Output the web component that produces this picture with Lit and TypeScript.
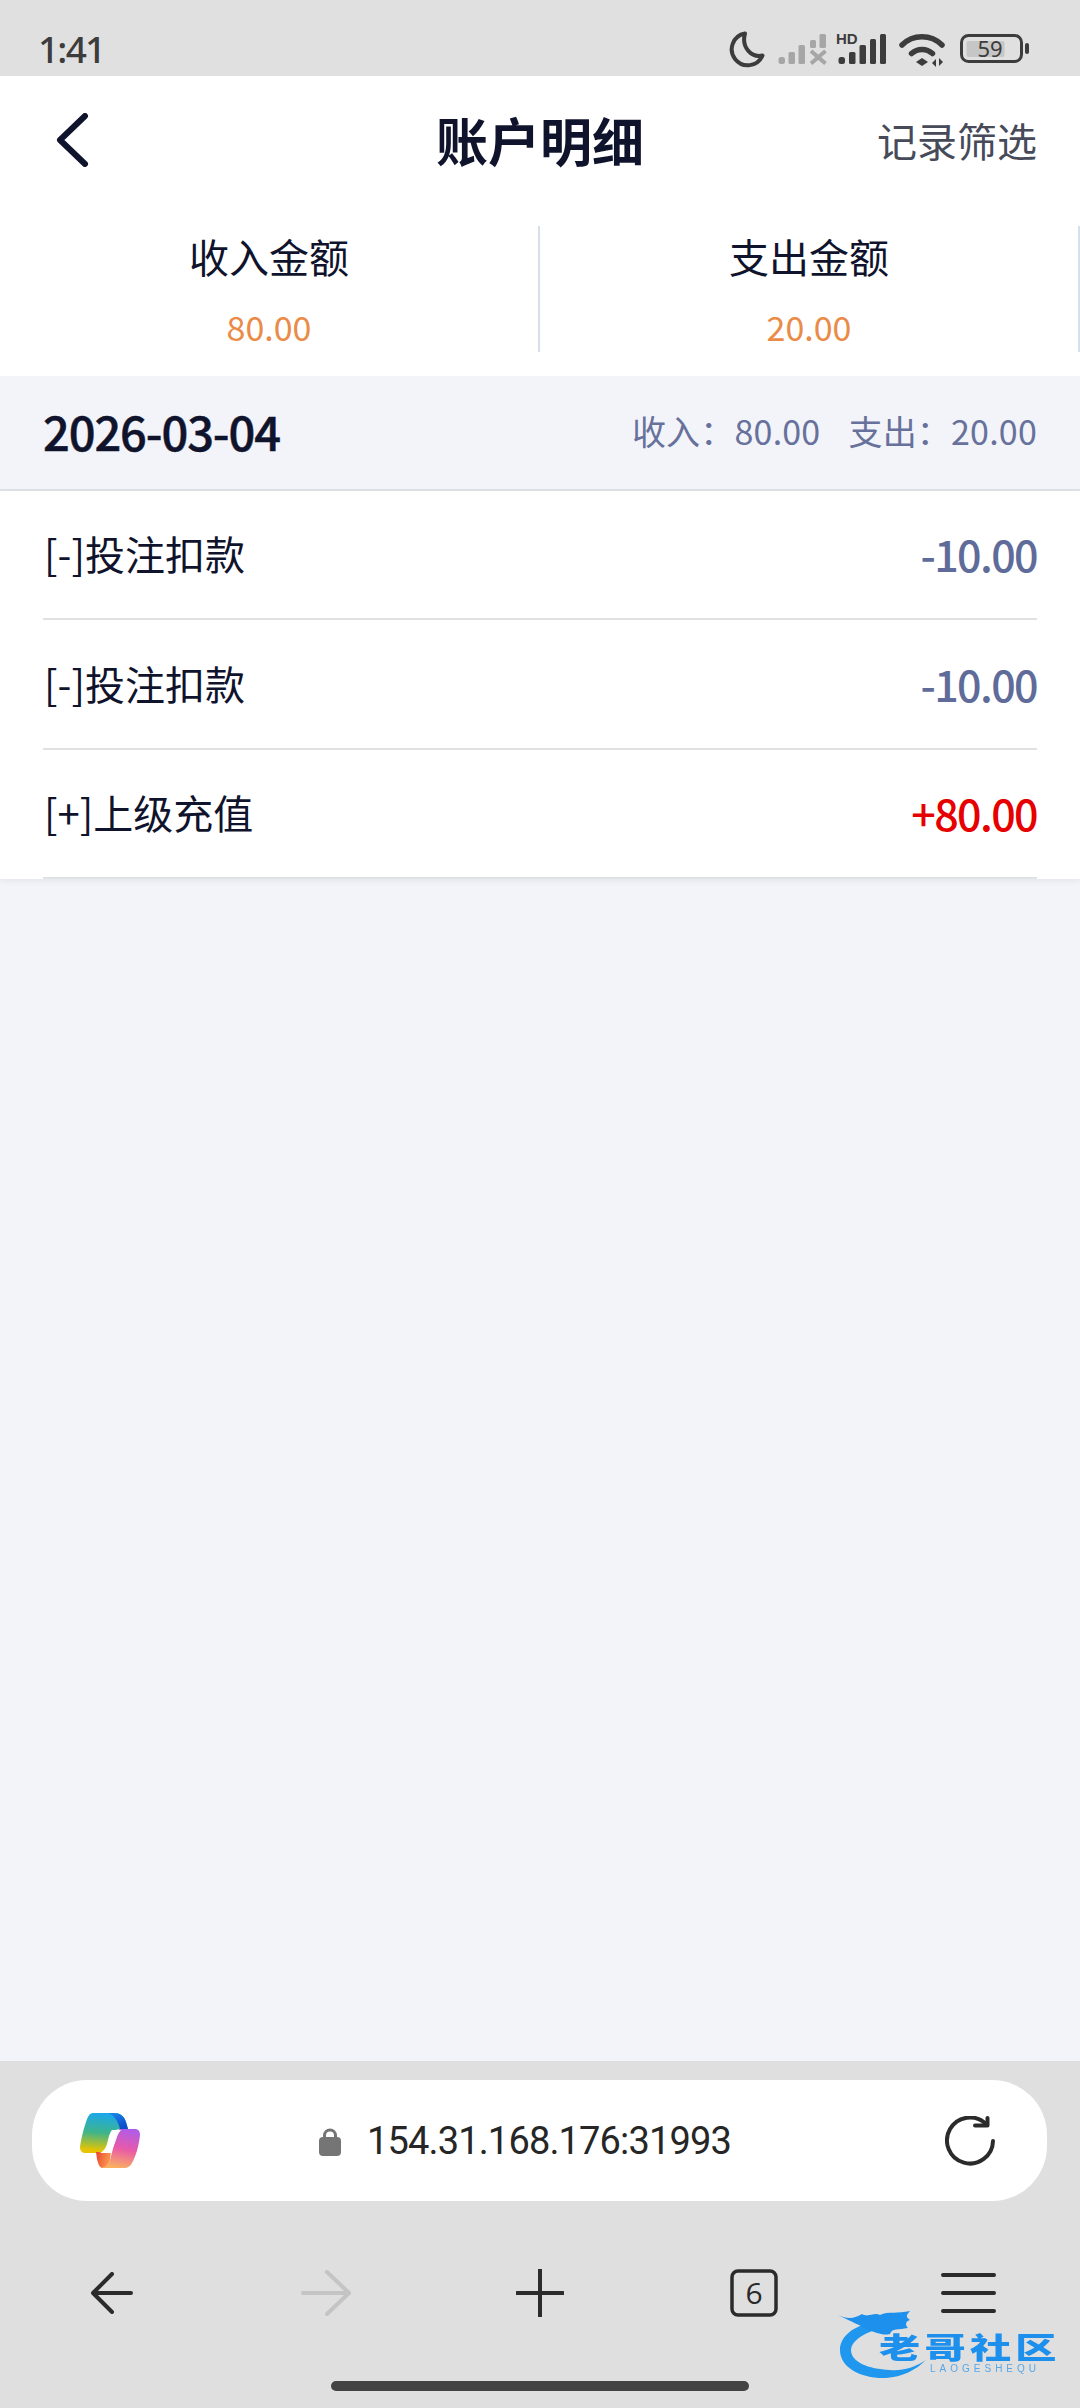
import { LitElement, html, css } from "lit";
import { customElement } from "lit/decorators.js";

const rows = [
  { label: "[-]投注扣款", amt: "-10.00", pos: false },
  { label: "[-]投注扣款", amt: "-10.00", pos: false },
  { label: "[+]上级充值", amt: "+80.00", pos: true },
];

@customElement("app-root")
export class AppRoot extends LitElement {
  static styles = css`
    :host { display: block; width: 1080px; height: 2408px; overflow: hidden; position: relative; background: #f2f4f9;
      font-family: "Noto Sans CJK SC", "Noto Sans", sans-serif; color: #10132c; }
    .page { display: flex; flex-direction: column; height: 2408px; }
    .status { height: 76px; background: #e0e0e0; display: flex; align-items: center; justify-content: space-between; padding: 0 40px 0 38px; box-sizing: border-box; flex: none; }
    .time { font-family: "Noto Sans", sans-serif; font-size: 37px; font-weight: 500; color: #3c3c3c; line-height: 48px; letter-spacing: -1.8px; margin-top: 22px; }
    .status svg { display: block; margin-top: 24px; }
    .nav { height: 128px; background: #fff; display: grid; grid-template-columns: 1fr auto 1fr; align-items: center; padding: 0 43px; flex: none; box-sizing: border-box; }
    .nav h1 { margin: 0; font-size: 52px; font-weight: 700; line-height: 70px; }
    .filter { font-size: 40px; color: #474a59; font-weight: 400; line-height: 56px; justify-self: end; }
    .back { display: block; margin-left: 12px; }
    .summary { background: #fff; display: flex; padding: 22px 0 24px; flex: none; }
    .cell { flex: 1; height: 126px; border-right: 2px solid #d5e0ea; box-sizing: border-box; text-align: center; }
    .cell .k { font-size: 40px; line-height: 56px; margin-top: 2px; font-weight: 400; }
    .cell .v { font-size: 34px; line-height: 46px; color: #ea8b48; margin-top: 20px; }
    .date { height: 114.5px; flex: none; display: flex; align-items: center; justify-content: space-between; padding: 0 43px; border-bottom: 2px solid #e0e2e6; box-sizing: border-box; }
    .date b { font-size: 47px; font-weight: 500; line-height: 60px; letter-spacing: -1.1px; margin-top: -2px; -webkit-text-stroke: 0.5px #10132c; }
    .sums { display: flex; gap: 28px; font-size: 34px; color: #67719b; line-height: 46px; letter-spacing: 0.2px; margin-top: -2px; }
    .list { background: #fff; padding: 0 43px; flex: none; box-shadow: 0 2px 6px rgba(60, 70, 100, 0.08); }
    .row { height: 129.5px; display: flex; align-items: center; justify-content: space-between; border-bottom: 2px solid #e0e1e3; box-sizing: border-box; }
    .row .l { font-size: 40px; color: #10132c; line-height: 56px; margin-left: 1px; margin-top: -2px; }
    .row .a { font-size: 43px; font-weight: 500; color: #5f6c9a; line-height: 56px; letter-spacing: -1.6px; margin-top: -2px; }
    .row .a.pos { color: #e60000; }
    .spacer { flex: 1; }
    .bottom { height: 347px; background: #dfdfdf; flex: none; position: relative; box-sizing: border-box; padding: 19px 33px 0 32px; }
    .pill { height: 121px; background: #fff; border-radius: 55px; display: flex; align-items: center; padding: 0 52px 0 48px; }
    .logo { display: block; flex: none; }
    .lock { display: block; flex: none; margin-left: 179px; margin-top: 2px; }
    .url { font-family: Roboto, "Noto Sans", sans-serif; font-size: 38px; color: #262626; line-height: 54px; letter-spacing: -0.85px; margin-left: 26px; white-space: nowrap; }
    .reload { display: block; flex: none; margin-left: auto; }
    .tools { display: flex; height: 146px; align-items: center; margin: 19px -33px 0 -32px; padding-left: 5px; }
    .tool { width: 214px; display: flex; justify-content: center; }
    .home { position: absolute; left: 331px; top: 320px; width: 418px; height: 10px; border-radius: 5px; background: #434343; }
    .wm { position: absolute; left: 838px; top: 2310px; display: block; filter: blur(0.5px); }
    .wmt { position: absolute; left: 879px; top: 2329px; font-size: 29px; line-height: 34px; font-weight: 900; color: #1c90ec; white-space: nowrap; letter-spacing: 3px; transform: scaleX(1.42); transform-origin: left center; filter: blur(0.4px); }
    .wms { position: absolute; left: 930px; top: 2364px; font-family: "Liberation Sans", sans-serif; font-size: 10px; line-height: 10px; color: #5aa7e6; letter-spacing: 4px; white-space: nowrap; filter: blur(0.3px); }
  `;

  render() {
    return html`
      <div class="page">
        <div class="status">
          <div class="time">1:41</div>
          <svg width="320" height="40" viewBox="0 0 320 40">
            <path d="M25 3.5A16 16 0 1 0 42.5 25.5C32 28 21 18 25 3.5Z" fill="none" stroke="#3c3c3c" stroke-width="4" stroke-linejoin="round"/>
            <g fill="#a6a6a6">
              <rect x="58.5" y="27" width="6.5" height="7" rx="2.5"/>
              <rect x="68.5" y="22" width="6.5" height="12" rx="1.5"/>
              <rect x="78.5" y="15" width="6.5" height="19" rx="1.5"/>
              <rect x="90" y="10" width="6" height="8" rx="1.5"/>
              <rect x="99.5" y="4" width="6.5" height="14" rx="1.5"/>
            </g>
            <path d="M91 21l14.5 12.5m0-12.500L91 33.500" stroke="#a6a6a6" stroke-width="4" fill="none"/>
            <g fill="#3c3c3c">
              <rect x="118.500" y="27" width="6.500" height="7" rx="2.500"/>
              <rect x="129" y="22" width="6.500" height="12" rx="1.500"/>
              <rect x="139.500" y="15" width="6.500" height="19" rx="1.500"/>
              <rect x="150" y="9" width="6" height="25" rx="1.500"/>
              <rect x="160" y="4" width="6" height="30" rx="1.500"/>
            </g>
            <text x="116" y="14" font-family="Liberation Sans, sans-serif" font-weight="700" font-size="15" fill="#3c3c3c">HD</text>
            <path d="M182 15c11-11 29-11 40 0M191.500 23.500c6-5.500 15-5.500 21 0" fill="none" stroke="#3c3c3c" stroke-width="5.500" stroke-linecap="round"/>
            <path d="M196 32l6-4 6 4-6 4z" fill="#3c3c3c"/>
            <path d="M216 37v-8l-4 4zM219 28v8l4-4z" fill="#3c3c3c"/>
            <rect x="241.500" y="5.500" width="60" height="26" rx="7" fill="none" stroke="#3c3c3c" stroke-width="3"/>
            <rect x="246.500" y="11" width="38" height="16" rx="2" fill="#c6c6c6"/>
            <rect x="305" y="13" width="4" height="11" rx="2" fill="#3c3c3c"/>
            <text x="270" y="27" text-anchor="middle" font-family="Noto Sans, sans-serif" font-size="22" fill="#3c3c3c">59</text>
          </svg>
        </div>
        <div class="nav">
          <svg class="back" width="34" height="54" viewBox="0 0 34 54">
            <path d="M30 3L5 27l25 24" fill="none" stroke="#10132c" stroke-width="6" stroke-linecap="round" stroke-linejoin="round"/>
          </svg>
          <h1>账户明细</h1>
          <div class="filter">记录筛选</div>
        </div>
        <div class="summary">
          <div class="cell"><div class="k">收入金额</div><div class="v">80.00</div></div>
          <div class="cell"><div class="k">支出金额</div><div class="v">20.00</div></div>
        </div>
        <div class="date"><b>2026-03-04</b><div class="sums"><span>收入：80.00</span><span>支出：20.00</span></div></div>
        <div class="list">
          ${rows.map(
            (r) => html`<div class="row"><div class="l">${r.label}</div><div class="a ${r.pos ? "pos" : ""}">${r.amt}</div></div>`
          )}
        </div>
        <div class="spacer"></div>
        <div class="bottom">
          <div class="pill">
            <svg class="logo" width="60" height="56" viewBox="0 0 60 56">
              <defs>
                <linearGradient id="lg1" x1="0.5" y1="0" x2="0.4" y2="1"><stop offset="0" stop-color="#1aa7ee"/><stop offset=".5" stop-color="#3fb58a"/><stop offset=".95" stop-color="#e8c400"/></linearGradient>
                <linearGradient id="lg2" x1="0.6" y1="0" x2="0.4" y2="1"><stop offset="0" stop-color="#b05ce6"/><stop offset=".5" stop-color="#e85aa8"/><stop offset="1" stop-color="#fbb060"/></linearGradient>
                <linearGradient id="lg3" x1="0" y1="0" x2="1" y2="0.3"><stop offset="0" stop-color="#e8452e"/><stop offset="1" stop-color="#fb9a52"/></linearGradient>
                <linearGradient id="lg4" x1="0" y1="0" x2="0.6" y2="1"><stop offset="0" stop-color="#1a8cee"/><stop offset="1" stop-color="#0f4cc8"/></linearGradient>
              </defs>
              <path d="M13 0H34C40 0 44 3 46 9L48 16H40C36 16 33 18 31 22L26 36C25 39 23 40 20 40H6C2 40 0 38 0 34 1 26 3 18 6 9 8 3 10 0 13 0Z" fill="url(#lg1)"/>
              <path d="M28 0H34C40 0 44 3 46 9L48 16H40C38 8 34 2 28 0Z" fill="url(#lg4)"/>
              <path d="M16 39H31L30 47C29 51 26 55 22 55 19 54 18 50 17 46Z" fill="url(#lg3)"/>
              <path d="M40 16H55C58 16 60 18 60 22 59 32 56 43 52 50 50 54 47 55 44 55H22C26 54 29 51 30 47L36 24C37 19 38 16 40 16Z" fill="url(#lg2)"/>
              <path d="M32 17H41C38 20 37 24 36 27L31 40H20C24 38 26 34 27 31L29 23C30 20 31 18 32 17Z" fill="#fff"/>
            </svg>
            <svg class="lock" width="22" height="28" viewBox="0 0 22 28">
              <path d="M5.500 12V7.500a5.500 5.500 0 0 1 11 0V12" fill="none" stroke="#757575" stroke-width="3"/>
              <rect x="0" y="9" width="22" height="19" rx="4" fill="#757575"/>
            </svg>
            <span class="url">154.31.168.176:31993</span>
            <svg class="reload" width="50" height="50" viewBox="0 0 50 50">
              <path d="M41 8A23 23 0 1 0 48 25" fill="none" stroke="#2b2b2b" stroke-width="4" stroke-linecap="round"/>
              <path d="M30 9.500h12.500V2" fill="none" stroke="#2b2b2b" stroke-width="4" stroke-linecap="round" stroke-linejoin="round"/>
            </svg>
          </div>
          <div class="tools">
            <div class="tool"><svg width="42" height="42" viewBox="0 0 42 42"><path d="M40 21H2M21 2L2 21l19 19" fill="none" stroke="#2b2b2b" stroke-width="4" stroke-linecap="round" stroke-linejoin="round"/></svg></div>
            <div class="tool"><svg width="50" height="46" viewBox="0 0 50 46"><path d="M2 23h46M26 2l22 21-22 21" fill="none" stroke="#c4c4c4" stroke-width="4" stroke-linecap="round" stroke-linejoin="round"/></svg></div>
            <div class="tool"><svg width="48" height="48" viewBox="0 0 48 48"><path d="M1 24h46M24 1v46" fill="none" stroke="#2b2b2b" stroke-width="4" stroke-linecap="round"/></svg></div>
            <div class="tool"><svg width="48" height="48" viewBox="0 0 48 48"><rect x="2" y="2" width="44" height="44" rx="6" fill="none" stroke="#2b2b2b" stroke-width="3.500"/><text x="24" y="35" text-anchor="middle" font-family="Open Sans, sans-serif" font-size="30" fill="#2b2b2b">6</text></svg></div>
            <div class="tool"><svg width="55" height="42" viewBox="0 0 55 42"><path d="M2 3h51M2 21h51M2 39h51" fill="none" stroke="#2b2b2b" stroke-width="4" stroke-linecap="round"/></svg></div>
          </div>
          <div class="home"></div>
        </div>
      </div>
      <svg class="wm" width="90" height="72" viewBox="0 0 90 72">
        <path d="M31 13C12 18 2 28 2 40 2 58 24 69 48 68 64 67 78 60 88 50 76 58 64 61 52 60 30 59 13 52 13 40 13 32 24 24 37 20Z" fill="#1f97ee"/>
        <path d="M0 5C10 10 18 8 24 4 30 8 36 2 42 5 50 1 60 4 72 1 70 4 66 6 72 10 66 12 68 16 70 18 60 20 54 18 52 24 44 26 38 22 30 20 24 16 14 12 0 5Z" fill="#1c90ec"/>
      </svg>
      <div class="wmt">老哥社区</div>
      <div class="wms">LAOGESHEQU</div>
    `;
  }
}
